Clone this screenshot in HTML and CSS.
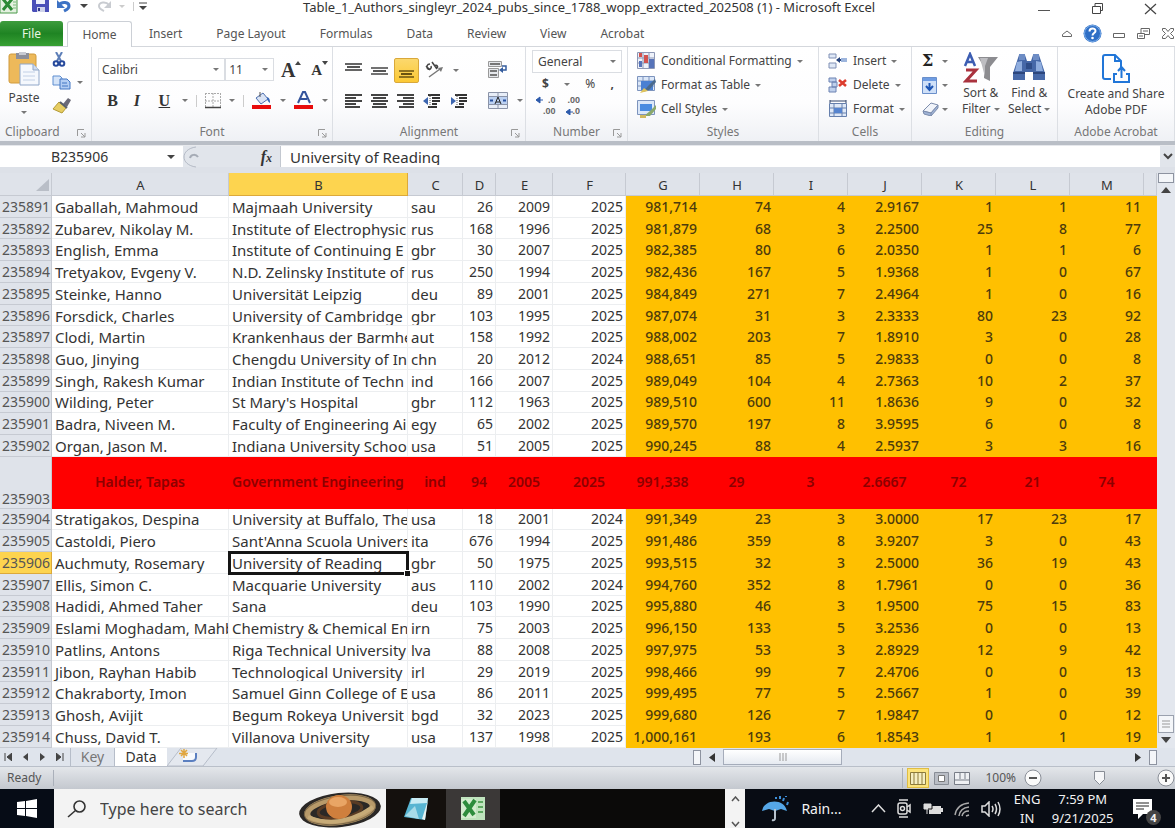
FILE: index.html
```html
<!DOCTYPE html>
<html lang="en">
<head>
<meta charset="utf-8">
<title>Table_1_Authors_singleyr_2024_pubs_since_1788_wopp_extracted_202508 (1) - Microsoft Excel</title>
<link rel="stylesheet" href="styles.css">
</head>
<body>
<header class="titlebar">
  <div class="quick">
    <svg width="18" height="15" viewBox="0 0 18 15"><path d="M0 0h17v14H0z" fill="#e4f1e0" stroke="#4a9a4a"/><path d="M3 0l9 11M12 0L3 11" stroke="#2c8a35" stroke-width="3"/><path d="M13 3h3M13 6h3M13 9h3" stroke="#7bb97b"/></svg>
    <button aria-label="Save"><svg width="17" height="14" viewBox="0 0 17 14"><path d="M0 0h17v13H1L0 12z" fill="#4a4fb8"/><path d="M4 0h9v5H4z" fill="#eef0fb"/><path d="M5 8h8v5H5z" fill="#cfd3ea"/><path d="M6 9h2v3H6z" fill="#33388c"/></svg></button>
    <button aria-label="Undo"><svg width="15" height="13" viewBox="0 0 15 13"><path d="M2 5c3-4 10-3 10 1 0 3-3 4-5 5" fill="none" stroke="#3d72c4" stroke-width="3"/><path d="M0 0v8h8z" fill="#3d72c4"/></svg></button>
    <i class="dd dark"></i>
    <button aria-label="Redo"><svg width="15" height="13" viewBox="0 0 15 13"><path d="M13 5C10 1 3 2 3 6c0 3 3 4 5 5" fill="none" stroke="#c9ccd1" stroke-width="2"/><path d="M15 1v7H8z" fill="#c9ccd1"/></svg></button>
    <i class="dd pale"></i>
    <button class="custom" aria-label="Customize"><svg width="8" height="9" viewBox="0 0 8 9"><path d="M0 1h8" stroke="#444" stroke-width="1"/><path d="M0 4h8L4 8z" fill="#444"/></svg></button>
  </div>
  <h1>Table_1_Authors_singleyr_2024_pubs_since_1788_wopp_extracted_202508 (1) - Microsoft Excel</h1>
  <div class="winbtns">
    <button aria-label="Minimize"><svg width="13" height="13"><path d="M0 8.500h12" stroke="#555"/></svg></button>
    <button aria-label="Restore"><svg width="13" height="13" fill="none" stroke="#444"><path d="M1.500 4.500h8v7h-8zM4 4V1.500h7.500v7H10"/></svg></button>
    <button aria-label="Close"><svg width="13" height="13"><path d="M1 2l11 10M12 2L1 12" stroke="#444" stroke-width="1.200"/></svg></button>
  </div>
</header>

<nav class="tabs">
  <button class="file">File</button>
  <button class="tab home">Home</button>
  <button class="tab">Insert</button>
  <button class="tab">Page Layout</button>
  <button class="tab">Formulas</button>
  <button class="tab">Data</button>
  <button class="tab">Review</button>
  <button class="tab">View</button>
  <button class="tab">Acrobat</button>
  <div class="tabtools">
    <svg width="12" height="12" fill="none" stroke="#666"><path d="M1.500 8.500h9v-2L6 3 1.500 6.500z"/></svg>
    <svg width="19" height="19"><circle cx="9.500" cy="9.500" r="9" fill="#2f6fc6"/><circle cx="9.500" cy="9.500" r="8" fill="none" stroke="#7fb0ea"/><path d="M6.500 7.500c0-4 6-4 6-.5 0 2-3 2-3 4.500" fill="none" stroke="#fff" stroke-width="2"/><circle cx="9.500" cy="14" r="1.300" fill="#fff"/></svg>
    <svg width="14" height="12" fill="none" stroke="#666"><path d="M1.500 5.500h11v4h-11z"/></svg>
    <svg width="15" height="14" fill="none" stroke="#666"><path d="M1.500 6.500h7v5h-7zM5 6V1.500h8.500v6H9M7 4h5M3 9h4" /></svg>
    <svg width="14" height="13" fill="none" stroke="#666"><path d="M1.500 1.500h3l2.500 3 2.500-3h3v2l-3 3 3 3v2h-3L7 8.500l-2.500 3h-3v-2l3-3-3-3z"/></svg>
  </div>
</nav>

<section class="ribbon">
  <div class="group">
    <div class="body clip">
      <button class="big paste">
        <svg width="32" height="34" viewBox="0 0 32 34"><rect x="1" y="2" width="27" height="29" rx="2" fill="#edb95a" stroke="#d09a3c"/><path d="M8 1h13v6H8z" fill="#8d8f9a"/><path d="M11 0h7v3h-7z" fill="#c9cbd3"/><path d="M12 12h13l6 6v15H12z" fill="#f5f8fd" stroke="#8fa6c8"/><path d="M25 12v6h6" fill="#cfdcf0" stroke="#8fa6c8"/><path d="M15 20h12M15 24h12M15 28h12" stroke="#c2d0e6"/></svg>
        <span>Paste</span><i class="dd"></i>
      </button>
      <div class="stack">
        <svg width="14" height="15" viewBox="0 0 14 15"><path d="M4 0l5 9M10 0L5 9" stroke="#5d7fb8" stroke-width="2"/><circle cx="4" cy="11.500" r="2.300" fill="none" stroke="#26499c" stroke-width="2"/><circle cx="10" cy="11.500" r="2.300" fill="none" stroke="#26499c" stroke-width="2"/></svg>
        <div class="row"><svg width="19" height="15" viewBox="0 0 19 15"><path d="M1 1h7l2 2v7H1z" fill="#d5e4f8" stroke="#5f8ed0"/><path d="M8 4h7l3 3v7H8z" fill="#b2cdf3" stroke="#4377c3"/><path d="M10 8h5M10 11h6" stroke="#4377c3"/></svg><i class="dd"></i></div>
        <svg width="19" height="16" viewBox="0 0 19 16"><path d="M11 6l5-6 3 2-4 7z" fill="#6b6a78"/><path d="M7 4l7 6-4 5-9-4z" fill="#e7cd62" stroke="#b39a36"/><path d="M8 4l7 6" stroke="#59606e" stroke-width="2"/></svg>
      </div>
    </div>
    <div class="label start-label">Clipboard<svg class="launch" width="9" height="9"><path d="M.5 7V.5H7M4 4l4 4M8 4v4H4" fill="none" stroke="#999"/></svg></div>
  </div>

  <div class="group">
    <div class="body font">
      <div class="row">
        <label class="combo wide"><input type="text" value="Calibri" aria-label="Font"><i class="dd"></i></label>
        <label class="combo size"><input type="text" value="11" aria-label="Font size"><i class="dd"></i></label>
        <button class="serif grow">A<svg width="6" height="4"><path d="M0 4h6L3 0z" fill="#444"/></svg></button>
        <button class="serif shrink">A<svg width="6" height="4"><path d="M0 0h6L3 4z" fill="#444"/></svg></button>
      </div>
      <div class="row marks">
        <button class="serif b">B</button><button class="serif i">I</button><button class="serif u">U</button><i class="dd"></i>
        <span class="vline"></span>
        <svg width="16" height="16"><path d="M.5 0v15M8 0v15M15.500 0v15M0 .5h16M0 8h16" stroke="#aaa" stroke-dasharray="2 1"/><path d="M0 14.500h16" stroke="#444" stroke-width="1.500"/></svg><i class="dd"></i>
        <span class="vline"></span>
        <svg width="20" height="19" viewBox="0 0 20 19"><path d="M4 7l7-5 5 6-7 5z" fill="#d9e3f5" stroke="#4d6fae"/><path d="M8 6V1" stroke="#555"/><path d="M15 6c3 1 3 4 3 6-2-1-3-3-3-6" fill="#3566b8"/><path d="M0 14h19v4H0z" fill="#e80c0c"/></svg><i class="dd"></i>
        <svg width="20" height="19" viewBox="0 0 20 19"><path d="M4 12l5-11h2l5 11M6 8h7" fill="none" stroke="#34549c" stroke-width="2"/><path d="M0 14h19v4H0z" fill="#e80c0c"/></svg><i class="dd"></i>
      </div>
    </div>
    <div class="label">Font<svg class="launch" width="9" height="9"><path d="M.5 7V.5H7M4 4l4 4M8 4v4H4" fill="none" stroke="#999"/></svg></div>
  </div>

  <div class="group">
    <div class="body align">
      <div class="row">
        <svg width="17" height="24"><path d="M0 6h17M0 12h17" stroke="#333" stroke-width="1.500"/><path d="M2 9h13" stroke="#555" stroke-width="2"/></svg>
        <svg width="17" height="24"><path d="M0 10h17M0 16h17" stroke="#444" stroke-width="1.500"/><path d="M2 13h13" stroke="#555" stroke-width="2"/></svg>
        <button class="on" aria-label="Bottom Align"><svg width="17" height="24"><path d="M1 13h15M1 19h15" stroke="#6b5310" stroke-width="1.500"/><path d="M3 16h11" stroke="#6b5310" stroke-width="2"/></svg></button>
        <svg width="19" height="18" viewBox="0 0 19 18"><path d="M1 5l4 4M5 3c-3 0-4 3-2 5 2 1 4-1 3-3M7 1l5 7M9 5c3-2 5 1 2 3" fill="none" stroke="#444" stroke-width="1.500"/><path d="M4 16L15 8" stroke="#777" stroke-width="1.500"/><path d="M13 7l5-1-2 5z" fill="#777"/></svg><i class="dd"></i>
        <svg class="far" width="20" height="18" viewBox="0 0 20 18"><path d="M.5.5h13v5h-13zM.5 7.500h10v9h-10z" fill="#e6e8ec" stroke="#999"/><path d="M2 3h10M2 10h7M2 14h7" stroke="#777" stroke-width="2"/><path d="M14 5h4v4h-4" fill="none" stroke="#345c9d" stroke-width="1.500"/><path d="M15 6v6l-4-3z" fill="#345c9d"/></svg>
      </div>
      <div class="row">
        <svg width="17" height="14"><path d="M0 1h17M0 4h11M0 7h17M0 10h11M0 13h15" stroke="#444" stroke-width="2"/></svg>
        <svg width="17" height="14"><path d="M0 1h17M2 4h13M0 7h17M2 10h13M1 13h15" stroke="#444" stroke-width="2"/></svg>
        <svg class="mid" width="17" height="14"><path d="M0 1h17M6 4h11M0 7h17M6 10h11M2 13h15" stroke="#444" stroke-width="2"/></svg>
        <svg width="18" height="14"><path d="M5 1h12M9 4h8M9 10h5M5 13h9" stroke="#333" stroke-width="2"/><path d="M9 7h8" stroke="#333" stroke-width="2"/><path d="M0 7l5-4v8z" fill="#3d66b0"/><path d="M7 0v14" stroke="#555" stroke-dasharray="1 1"/></svg>
        <svg width="18" height="14"><path d="M5 1h12M9 4h8M9 10h5M5 13h9" stroke="#333" stroke-width="2"/><path d="M9 7h8" stroke="#333" stroke-width="2"/><path d="M6 7L1 3v8z" fill="#3d66b0"/><path d="M7 0v14" stroke="#555" stroke-dasharray="1 1"/></svg>
        <svg class="far" width="20" height="17"><path d="M.5.5h19v16H.5zM.5 4.500h19M.5 12.500h19M10 0v4M10 13v4" fill="#e8eef8" stroke="#8a93a8"/><path d="M1 5h18v7H1z" fill="#bcd1f2"/><path d="M2 8.500h3M15 8.500h3" stroke="#27519f" stroke-width="2"/><path d="M7 12l3-7 3 7M8 10h4" fill="none" stroke="#222"/></svg><i class="dd"></i>
      </div>
    </div>
    <div class="label">Alignment<svg class="launch" width="9" height="9"><path d="M.5 7V.5H7M4 4l4 4M8 4v4H4" fill="none" stroke="#999"/></svg></div>
  </div>

  <div class="group">
    <div class="body number">
      <label class="combo"><input type="text" value="General" aria-label="Number format"><i class="dd"></i></label>
      <div class="row money"><button class="bold">$</button><i class="dd"></i><button>%</button><button class="bold">,</button></div>
      <div class="row dec">
        <button aria-label="Increase Decimal"><svg width="7" height="10"><path d="M0 5l4-3v6zM3 5h4" fill="#2c5aab" stroke="#2c5aab"/></svg><span class="digits"><span>.0</span><span>.00</span></span></button>
        <button aria-label="Decrease Decimal"><span class="digits"><span>.00</span><span class="back"><svg width="7" height="6"><path d="M0 3l4-3v6zM3 3h4" fill="#2c5aab" stroke="#2c5aab"/></svg>.0</span></span></button>
      </div>
    </div>
    <div class="label">Number<svg class="launch" width="9" height="9"><path d="M.5 7V.5H7M4 4l4 4M8 4v4H4" fill="none" stroke="#999"/></svg></div>
  </div>

  <div class="group">
    <div class="body list">
      <button><svg width="19" height="18"><path d="M.5.5h17v16H.5zM.5 6h17M.5 11h17M6 0v17M12 0v17" fill="#eef2fa" stroke="#8d97b5"/><path d="M2 1h3v4H2zM7 3h4v8H7z" fill="#d2524e"/><path d="M2 9h3v6H2zM12 7h5v9h-5z" fill="#5673b9"/></svg>Conditional Formatting<i class="dd"></i></button>
      <button><svg width="19" height="18"><path d="M.5.5h17v14H.5zM.5 5h17M.5 10h17M6 0v15M12 0v15" fill="#dbe7f8" stroke="#7c93bd"/><path d="M4 5h12v9H4z" fill="#4a80d2"/><path d="M6 16l5-6 7-7 1 3-7 8z" fill="#4a6a8e"/><path d="M3 17l4-5 4 3z" fill="#dfc35b"/></svg>Format as Table<i class="dd"></i></button>
      <button><svg width="19" height="18"><path d="M.5.5h17v14H.5z" fill="#dbe7f8" stroke="#7c93bd"/><path d="M3 4h12v7H3z" fill="#4a8be0"/><path d="M7 16l6-5 6-6v4l-6 7z" fill="#8ba86b"/><path d="M3 15h6v3H3z" fill="#d0b95e"/></svg>Cell Styles<i class="dd"></i></button>
    </div>
    <div class="label">Styles</div>
  </div>

  <div class="group">
    <div class="body list cells">
      <button><svg width="20" height="16"><path d="M1 1h7v4H1zM1 10h7v5H1z" fill="#dfe8f6" stroke="#8090b5"/><path d="M9 7h6" stroke="#28457e" stroke-width="2"/><path d="M8 7l4-3v6z" fill="#28457e"/><path d="M13 5h6v4h-6z" fill="#9db5dd"/></svg>Insert<i class="dd"></i></button>
      <button><svg width="20" height="16"><path d="M1 1h7v4H1zM1 10h7v5H1zM4 5h5v5H4z" fill="#bfd0ec" stroke="#6c82b2"/><path d="M11 3l7 6M18 3l-7 6" stroke="#dc3c2e" stroke-width="2.500"/></svg>Delete<i class="dd"></i></button>
      <button><svg width="20" height="18"><path d="M1.500 3.500h17v13h-17zM6 3v14M14 3v14M2 8h16M2 13h16" fill="#dfe9f8" stroke="#6680ad"/><path d="M6 8h8v5H6z" fill="#5684cf"/><path d="M2 1h16M2 0v3M18 0v3" stroke="#31456b"/></svg>Format<i class="dd"></i></button>
    </div>
    <div class="label">Cells</div>
  </div>

  <div class="group">
    <div class="body editing">
      <div class="tools">
        <div class="row"><b>Σ</b><i class="dd"></i></div>
        <div class="row"><svg width="16" height="17"><path d="M.5.5h14v16H.5z" fill="#cfe0f8" stroke="#6a8fca"/><path d="M1 1h13v3H1z" fill="#6e9ce2"/><path d="M7.500 6v6M4 9l3.500 4L11 9" fill="none" stroke="#1e56b5" stroke-width="2"/></svg><i class="dd"></i></div>
        <div class="row"><svg width="17" height="14"><path d="M1 9l8-8 7 2-7 8z" fill="#f1f4fa" stroke="#7c8cac"/><path d="M1 9l8 2v3l-7-2zM9 11l7-8v3l-7 8" fill="#9fb3d6" stroke="#7c8cac"/></svg><i class="dd"></i></div>
      </div>
      <button class="big"><svg width="36" height="31" viewBox="0 0 36 31"><path d="M15 5h20l-8 10v14l-6-3V15z" fill="#8c8c90"/><path d="M17 6h8l-3 8v11" fill="#bdbdc1"/><path d="M2 14L7 2l5 12M4 10h7" fill="none" stroke="#3c5db2" stroke-width="2.500"/><path d="M3 18h10L3 29h11" fill="none" stroke="#a9323e" stroke-width="3"/></svg><span>Sort &amp;<br>Filter <i class="dd"></i></span></button>
      <button class="big"><svg width="34" height="31" viewBox="0 0 34 31"><path d="M7 3h6l2 6h4l2-6h6l6 18v7H21v-8h-8v8H1v-7z" fill="#4668a8"/><path d="M7 2h6v6H7zM21 2h6v6h-6z" fill="#6d8cc4"/><path d="M5 10l5-1v10H3zM24 9l5 1 2 9h-7z" fill="#8fadde"/><path d="M1 21h12M21 21h12" stroke="#2c467c" stroke-width="2"/><path d="M14 11h6v6h-6z" fill="#2f4d88"/></svg><span>Find &amp;<br>Select <i class="dd"></i></span></button>
    </div>
    <div class="label">Editing</div>
  </div>

  <div class="group">
    <div class="body acrobat">
      <button class="big"><svg width="28" height="30" viewBox="0 0 28 30"><path d="M9 25H3a2 2 0 0 1-2-2V3a2 2 0 0 1 2-2h10l6 6v6M13 1v6h6" fill="none" stroke="#2176d8" stroke-width="2"/><path d="M15 20h-3v8h15v-8h-3M19.500 24V14M16 17l3.500-4 3.500 4" fill="none" stroke="#2176d8" stroke-width="2"/></svg><span>Create and Share<br>Adobe PDF</span></button>
    </div>
    <div class="label">Adobe Acrobat</div>
  </div>
</section>

<section class="formulabar">
  <label class="namebox"><input type="text" value="B235906" aria-label="Name Box"><i class="dd dark"></i></label>
  <div class="fx"><svg width="22" height="22" fill="none" stroke="#b4bac5"><path d="M13 1C-3 3-3 19 13 21"/><path d="M7 12c1-4 6-4 8-1" stroke="#a5abb5" stroke-width="2"/></svg><em>f<sub>x</sub></em></div>
  <input class="formula" type="text" value="University of Reading" aria-label="Formula Bar">
  <button class="expand" aria-label="Expand"><svg width="10" height="8"><path d="M1 1l4 4 4-4" fill="none" stroke="#444" stroke-width="2"/></svg></button>
</section>

<main class="sheet">
<div class="gridwrap">
<table class="grid">
<colgroup><col class="w0"><col class="wa"><col class="wb"><col class="wc"><col class="wd"><col class="we"><col class="wf"><col class="wn"><col class="wn"><col class="wn"><col class="wn"><col class="wn"><col class="wn"><col class="wn"><col class="wz"></colgroup>
<thead><tr><th class="corner"><svg width="13" height="12"><path d="M13 0v12H0z" fill="#b9bec7"/></svg><th>A<th class="cur">B<th>C<th>D<th>E<th>F<th>G<th>H<th>I<th>J<th>K<th>L<th>M<th></tr></thead>
<tbody>
<tr><th>235891<td>Gaballah, Mahmoud<td>Majmaah University<td>sau<td>26<td>2009<td>2025<td>981,714<td>74<td>4<td>2.9167<td>1<td>1<td>11<td></tr>
<tr><th>235892<td>Zubarev, Nikolay M.<td>Institute of Electrophysic<td>rus<td>168<td>1996<td>2025<td>981,879<td>68<td>3<td>2.2500<td>25<td>8<td>77<td></tr>
<tr><th>235893<td>English, Emma<td>Institute of Continuing E<td>gbr<td>30<td>2007<td>2025<td>982,385<td>80<td>6<td>2.0350<td>1<td>1<td>6<td></tr>
<tr><th>235894<td>Tretyakov, Evgeny V.<td>N.D. Zelinsky Institute of<td>rus<td>250<td>1994<td>2025<td>982,436<td>167<td>5<td>1.9368<td>1<td>0<td>67<td></tr>
<tr><th>235895<td>Steinke, Hanno<td>Universität Leipzig<td>deu<td>89<td>2001<td>2025<td>984,849<td>271<td>7<td>2.4964<td>1<td>0<td>16<td></tr>
<tr><th>235896<td>Forsdick, Charles<td>University of Cambridge<td>gbr<td>103<td>1995<td>2025<td>987,074<td>31<td>3<td>2.3333<td>80<td>23<td>92<td></tr>
<tr><th>235897<td>Clodi, Martin<td>Krankenhaus der Barmhe<td>aut<td>158<td>1992<td>2025<td>988,002<td>203<td>7<td>1.8910<td>3<td>0<td>28<td></tr>
<tr><th>235898<td>Guo, Jinying<td>Chengdu University of In<td>chn<td>20<td>2012<td>2024<td>988,651<td>85<td>5<td>2.9833<td>0<td>0<td>8<td></tr>
<tr><th>235899<td>Singh, Rakesh Kumar<td>Indian Institute of Techn<td>ind<td>166<td>2007<td>2025<td>989,049<td>104<td>4<td>2.7363<td>10<td>2<td>37<td></tr>
<tr><th>235900<td>Wilding, Peter<td>St Mary's Hospital<td>gbr<td>112<td>1963<td>2025<td>989,510<td>600<td>11<td>1.8636<td>9<td>0<td>32<td></tr>
<tr><th>235901<td>Badra, Niveen M.<td>Faculty of Engineering Ai<td>egy<td>65<td>2002<td>2025<td>989,570<td>197<td>8<td>3.9595<td>6<td>0<td>8<td></tr>
<tr><th>235902<td>Organ, Jason M.<td>Indiana University Schoo<td>usa<td>51<td>2005<td>2025<td>990,245<td>88<td>4<td>2.5937<td>3<td>3<td>16<td></tr>
<tr class="red"><th>235903<td>Halder, Tapas<td>Government Engineering<td>ind<td>94<td>2005<td>2025<td>991,338<td>29<td>3<td>2.6667<td>72<td>21<td>74<td></tr>
<tr><th>235904<td>Stratigakos, Despina<td>University at Buffalo, The<td>usa<td>18<td>2001<td>2024<td>991,349<td>23<td>3<td>3.0000<td>17<td>23<td>17<td></tr>
<tr><th>235905<td>Castoldi, Piero<td>Sant'Anna Scuola Univers<td>ita<td>676<td>1994<td>2025<td>991,486<td>359<td>8<td>3.9207<td>3<td>0<td>43<td></tr>
<tr><th class="cur">235906<td>Auchmuty, Rosemary<td class="sel">University of Reading<td>gbr<td>50<td>1975<td>2025<td>993,515<td>32<td>3<td>2.5000<td>36<td>19<td>43<td></tr>
<tr><th>235907<td>Ellis, Simon C.<td>Macquarie University<td>aus<td>110<td>2002<td>2024<td>994,760<td>352<td>8<td>1.7961<td>0<td>0<td>36<td></tr>
<tr><th>235908<td>Hadidi, Ahmed Taher<td>Sana<td>deu<td>103<td>1990<td>2025<td>995,880<td>46<td>3<td>1.9500<td>75<td>15<td>83<td></tr>
<tr><th>235909<td>Eslami Moghadam, Mahb<td>Chemistry &amp; Chemical En<td>irn<td>75<td>2003<td>2025<td>996,150<td>133<td>5<td>3.2536<td>0<td>0<td>13<td></tr>
<tr><th>235910<td>Patlins, Antons<td>Riga Technical University<td>lva<td>88<td>2008<td>2025<td>997,975<td>53<td>3<td>2.8929<td>12<td>9<td>42<td></tr>
<tr><th>235911<td>Jibon, Rayhan Habib<td>Technological University<td>irl<td>29<td>2019<td>2025<td>998,466<td>99<td>7<td>2.4706<td>0<td>0<td>13<td></tr>
<tr><th>235912<td>Chakraborty, Imon<td>Samuel Ginn College of E<td>usa<td>86<td>2011<td>2025<td>999,495<td>77<td>5<td>2.5667<td>1<td>0<td>39<td></tr>
<tr><th>235913<td>Ghosh, Avijit<td>Begum Rokeya Universit<td>bgd<td>32<td>2023<td>2025<td>999,680<td>126<td>7<td>1.9847<td>0<td>0<td>12<td></tr>
<tr><th>235914<td>Chuss, David T.<td>Villanova University<td>usa<td>137<td>1998<td>2025<td>1,000,161<td>193<td>6<td>1.8543<td>1<td>1<td>19<td></tr>
</tbody>
</table>
</div>
<div class="vscroll">
  <span class="split"></span>
  <svg width="10" height="6"><path d="M0 6h10L5 0z" fill="#444"/></svg>
  <span class="track"></span>
  <span class="thumb"><svg width="8" height="8"><path d="M0 1h8M0 4h8M0 7h8" stroke="#999"/></svg></span>
  <svg width="10" height="6"><path d="M0 0h10L5 6z" fill="#444"/></svg>
</div>
</main>

<div class="sheettabs">
  <div class="navs">
    <svg width="8" height="8"><path d="M1 0v8M8 0L3 4l5 4z" fill="#444" stroke="#444"/></svg>
    <svg width="5" height="8"><path d="M5 0L0 4l5 4z" fill="#444"/></svg>
    <svg width="5" height="8"><path d="M0 0l5 4-5 4z" fill="#444"/></svg>
    <svg width="8" height="8"><path d="M7 0v8M0 0l5 4-5 4z" fill="#444" stroke="#444"/></svg>
  </div>
  <button class="key">Key</button>
  <button class="data">Data</button>
  <svg class="newtab" width="52" height="18"><path d="M0 18L14 0h36L36 18z" fill="#e4e8ef" stroke="#b6bdc9"/><path d="M16 5h13v6q0 3-3 3H16z" fill="#f8fafd"/><path d="M16 13h9q4 0 4-4V5" fill="none" stroke="#5b7fc0" stroke-width="2"/><path d="M17 1v9M12 5.500h9M14 2l6 6M20 2l-6 6" stroke="#e0a640" stroke-width="1.500"/></svg>
  <div class="hscroll">
    <span class="split"></span>
    <svg width="6" height="9"><path d="M6 0L0 4.500 6 9z" fill="#333"/></svg>
    <span class="thumb"><svg width="8" height="8"><path d="M1 0v8M4 0v8M7 0v8" stroke="#999"/></svg></span>
    <span class="track"></span>
    <svg width="6" height="9"><path d="M0 0l6 4.500L0 9z" fill="#333"/></svg>
    <span class="split"></span>
  </div>
</div>

<footer class="status">
  <span class="ready">Ready</span>
  <div class="views">
    <button class="on" aria-label="Normal"><svg width="16" height="13"><path d="M.5.5h15v12H.5zM4 0v13M8 0v13M12 0v13" fill="#f5eec2" stroke="#8c7a3a"/></svg></button>
    <button aria-label="Page Layout"><svg width="15" height="13"><path d="M.5.5h14v12H.5z" fill="#b9bdc5" stroke="#888d96"/><path d="M4.500 3.500h6v6h-6z" fill="#fff" stroke="#777"/></svg></button>
    <button aria-label="Page Break"><svg width="16" height="13"><path d="M.5.5h15v12H.5zM6 0v7M11 0v7M0 8h16" fill="#eef0f3" stroke="#777c86"/></svg></button>
  </div>
  <span class="pct">100%</span>
  <button class="round" aria-label="Zoom out"><svg width="18" height="18"><circle cx="9" cy="9" r="8" fill="#fafafa" stroke="#8a8f98"/><path d="M5 9h8" stroke="#555" stroke-width="2"/></svg></button>
  <span class="slider"><svg width="11" height="14"><path d="M.5.5h10v8l-5 5-5-5z" fill="#f5f6f8" stroke="#888d96"/></svg></span>
  <button class="round" aria-label="Zoom in"><svg width="18" height="18"><circle cx="9" cy="9" r="8" fill="#fafafa" stroke="#8a8f98"/><path d="M5 9h8M9 5v8" stroke="#555" stroke-width="2"/></svg></button>
</footer>

<div class="taskbar">
  <button class="start" aria-label="Start"><svg width="20" height="19"><path d="M0 3l8-1v7H0zM9 2l11-2v9H9zM0 10h8v7l-8-1zM9 10h11v9L9 17z" fill="#fff"/></svg></button>
  <label class="search"><svg width="20" height="18" fill="none" stroke="#333" stroke-width="1.600"><circle cx="12.500" cy="6.500" r="5.500"/><path d="M8.500 10.500L1 17"/></svg><input type="text" placeholder="Type here to search" aria-label="Search">
    <svg width="84" height="38" viewBox="0 0 84 38"><ellipse cx="42" cy="20" rx="41" ry="17" fill="#2b2826" transform="rotate(-6 42 20)"/><ellipse cx="42" cy="20" rx="33" ry="12" fill="none" stroke="#b89a6a" stroke-width="6" transform="rotate(-8 42 20)"/><ellipse cx="42" cy="20" rx="36" ry="14" fill="none" stroke="#7c6848" transform="rotate(-8 42 20)"/><ellipse cx="42" cy="20" rx="22" ry="8" fill="none" stroke="#593b24" stroke-width="3" transform="rotate(-8 42 20)"/><ellipse cx="41" cy="17" rx="13" ry="12" fill="#cf7f3d"/><ellipse cx="40" cy="12" rx="9" ry="5" fill="#e9a565"/><path d="M10 27q32 13 65-10" fill="none" stroke="#c7ab78" stroke-width="4"/></svg>
  </label>
  <button class="app" aria-label="Notepad"><svg width="26" height="25"><path d="M8 2h17l-3 22L1 21z" fill="#58b5d2"/><path d="M9 2h16l-1 5L7 8z" fill="#c9ecf4"/><path d="M2 20l10-10 4 13z" fill="#a8dbe8"/><path d="M22 24l3-20-6 19z" fill="#e9f3f2"/></svg></button>
  <button class="app active" aria-label="Excel"><svg width="26" height="25"><path d="M1 1h24v23H1z" fill="#bfe3bd"/><path d="M1 3h15v19H1z" fill="#d3ecce"/><path d="M4 5l10 14M15 4L4 20" stroke="#2d8c3c" stroke-width="4"/><path d="M18 6h5M18 11h5M18 16h5" stroke="#5da860" stroke-width="2"/></svg></button>
  <span class="space"></span>
  <div class="updown"><svg width="9" height="6"><path d="M1 5l3.500-4L8 5" fill="none" stroke="#555" stroke-width="1.500"/></svg><svg width="9" height="6"><path d="M1 1l3.500 4L8 1" fill="none" stroke="#555" stroke-width="1.500"/></svg></div>
  <div class="tray">
    <svg width="28" height="28"><path d="M0 16C2 4 22 3 25 16l-6-2-6 2-6-2z" fill="#55a7e8"/><path d="M13 14v9q0 3-3 2" fill="none" stroke="#b8c4cf" stroke-width="2"/><path d="M14 2v2M18 1v3M22 3l-1 3M26 7l-1 3M24 1v1" stroke="#3e8fd8" stroke-width="2"/></svg>
    <span class="rain">Rain...</span>
    <svg class="more" width="15" height="10"><path d="M1 8l6.500-7L14 8" fill="none" stroke="#ddd" stroke-width="1.500"/></svg>
    <svg width="14" height="19" fill="none" stroke="#ddd" stroke-width="1.500"><path d="M2 1h9M2 18h9"/><rect x="1" y="4" width="9" height="11" rx="2"/><path d="M10 8l3-2v7l-3-2"/><circle cx="5.500" cy="9.500" r="2"/></svg>
    <svg width="20" height="14"><path d="M1 2h7v5H1zM4 7v5" fill="#ddd" stroke="#ddd"/><path d="M6 4h12v8H6z" fill="#ddd"/><path d="M18 6h2v4h-2z" fill="#ddd"/><path d="M9 4v3H5" fill="none" stroke="#111"/></svg>
    <svg width="16" height="16" fill="none" stroke="#aaa" stroke-width="1.500"><path d="M1 14Q3 3 15 2M5 15q1-8 10-9M8 15q1-5 7-5M12 15l3-1"/></svg>
    <svg width="21" height="16" fill="none" stroke="#ddd" stroke-width="1.500"><path d="M1 5h3l4-4v14l-4-4H1zM11 5q2 3 0 6M14 3q3 5 0 10M17 1q4 7 0 14"/></svg>
    <span class="two">ENG<br>IN</span>
    <span class="two clock">7:59 PM<br>9/21/2025</span>
    <span class="note"><svg width="20" height="20"><path d="M0 0h19v15h-9l-5 5v-5H0z" fill="#fff"/><path d="M3 4h13M3 7h13M3 10h8" stroke="#222"/></svg><b>4</b></span>
  </div>
</div>
</body>
</html>
```
FILE: styles.css
```css
* { box-sizing: border-box; }
html, body { height: 100%; margin: 0; }
body {
  display: flex; flex-direction: column; overflow: hidden;
  font: 12px/16px "Noto Sans", "Open Sans", sans-serif; color: #444; background: #fff;
}
button, input { font: inherit; color: inherit; border: 0; padding: 0; margin: 0; background: none; min-width: 0; }
button { display: flex; align-items: center; justify-content: center; white-space: nowrap; }
svg { display: block; flex: none; }
.dd { display: inline-block; flex: none; border: 3px solid transparent; border-top-color: #777; border-bottom: 0; }
.dd.dark { border-width: 4px 4px 0; border-top-color: #444; }
.dd.pale { border-top-color: #ccc; }
.vline { width: 1px; height: 12px; background: #ccc; }
.row { display: flex; align-items: center; }

/* Title bar */
.titlebar { display: flex; height: 21px; flex: none; align-items: flex-start; }
.quick { display: flex; gap: 8px; align-items: center; width: 303px; height: 12px; }
.quick > svg { margin-right: 6px; }
.quick .custom { padding-left: 5px; border-left: 1px solid #ccc; }
.titlebar h1 { margin: 0; flex: 1; font-size: 13px; font-weight: 400; line-height: 15px; color: #333; white-space: nowrap; }
.winbtns { display: flex; gap: 40px; padding: 2px 18px 0 0; }

/* Ribbon tabs */
.tabs { display: flex; height: 26px; flex: none; border-bottom: 1px solid #d4d7dc; color: #555; }
.tabs .file { width: 63px; height: 25px; margin-right: 4px; background: linear-gradient(#3d9c3d, #1f8423 50%, #37a033); color: #e9f6e4; border-radius: 3px 3px 0 0; }
.tab { padding: 0 17px; height: 26px; }
.tab.home { width: 65px; padding: 0; background: #fff; border: 1px solid #ccd0d6; border-bottom: 0; border-radius: 3px 3px 0 0; }
.tabtools { display: flex; gap: 10px; align-items: center; margin-left: auto; }

/* Ribbon */
.ribbon {
  display: grid; flex: none; height: 98px;
  grid-template-columns: 92fr 241fr 193fr 102fr 191fr 93fr 146fr 117fr;
  background: linear-gradient(#fff, #fdfdfe 60%, #eff1f5);
  border-bottom: 4px solid #b9bec6;
}
.group { display: flex; flex-direction: column; min-width: 0; border-right: 1px solid #dcdfe4; }
.body { flex: 1; display: flex; min-height: 0; }
.label { position: relative; height: 17px; line-height: 15px; text-align: center; color: #777; white-space: nowrap; }
.start-label { text-align: left; padding-left: 5px; }
.launch { position: absolute; right: 5px; bottom: 3px; }
.big { flex-direction: column; justify-content: flex-start; line-height: 16px; gap: 2px; }
.clip { padding: 5px 8px 0; gap: 12px; }
.paste { gap: 4px; }
.paste .dd { margin-top: 1px; }
.stack { display: flex; flex-direction: column; gap: 8px; }
.stack .row { gap: 6px; }
.font { flex-direction: column; padding: 11px 4px 0 6px; gap: 10px; }
.combo { display: flex; align-items: center; height: 23px; border: 1px solid #dadde2; padding: 0 5px; background: #fff; }
.combo input { flex: 1; width: 0; }
.combo.wide { width: 128px; padding-left: 3px; }
.combo.size { width: 49px; padding-left: 3px; }
.serif { font: bold 16px/18px "Liberation Serif", serif; color: #333; align-items: flex-start; }
.grow { font-size: 20px; margin-left: 7px; }
.shrink { font-size: 15px; margin-left: 10px; }
.marks { gap: 8px; padding-left: 8px; }
.serif.i { font-style: italic; width: 21px; }
.serif.u { text-decoration: underline; width: 21px; }
.serif.b { width: 14px; }
.align { flex-direction: column; padding: 11px 4px 0 12px; gap: 10px; }
.align .row { gap: 9px; }
.align .row:first-child { height: 24px; }
.align .on { margin: 0 -3px; width: 25px; height: 25px; border: 1px solid #d9a83a; border-radius: 2px; background: linear-gradient(#fbd86d, #fcc935); }
.align .far { margin-left: 11px; }
.align .row:first-child .far { margin-left: 20px; }
.number { flex-direction: column; padding: 3px 5px 0 6px; gap: 3px; }
.money { padding: 0 8px 0 10px; justify-content: space-between; }
.bold { font-weight: 700; }
.dec { gap: 10px; padding-left: 4px; }
.dec button { align-items: flex-start; }
.digits { display: flex; flex-direction: column; align-items: flex-end; font: bold 9px/11px "Liberation Sans", sans-serif; color: #666; }
.back { display: flex; align-items: center; }
.list { flex-direction: column; padding: 5px 8px 0 9px; gap: 6px; align-items: flex-start; }
.list button { height: 18px; gap: 5px; }
.editing { padding: 5px 6px 0 10px; gap: 5px; }
.tools { display: flex; flex-direction: column; gap: 6px; width: 32px; }
.tools .row { height: 18px; justify-content: space-between; padding-right: 6px; }
.tools b { font: bold 16px/18px "DejaVu Serif", serif; color: #222; }
.editing .big { flex: 1; }
.acrobat { padding: 7px 0 0; justify-content: center; }
.big .dd { vertical-align: middle; }

/* Formula bar */
.formulabar { display: flex; height: 28px; flex: none; border-bottom: 6px solid #dde1e8; font-size: 15px; color: #333; border-top: 1px solid #e6e8ec; }
.namebox { display: flex; align-items: center; width: 183px; padding: 0 8px 0 51px; }
.namebox input { flex: 1; width: 0; font-size: 14px; }
.fx { display: flex; align-items: center; justify-content: space-between; width: 98px; padding-right: 8px; background: #e1e5eb; border-right: 1px solid #c3c8d0; }
.fx em { font: italic bold 16px/18px "Liberation Serif", serif; }
.fx sub { font-size: 12px; line-height: 1px; vertical-align: baseline; }
.formula { flex: 1; padding-left: 9px; }
.expand { width: 15px; background: #e1e5eb; }

/* Worksheet */
.sheet { flex: 1; min-height: 0; display: flex; }
.gridwrap { flex: 1; min-width: 0; height: 100%; overflow: hidden; }
.grid { width: 100%; height: 100%; table-layout: fixed; border-collapse: separate; border-spacing: 0; font: 14px/18px "Noto Sans", sans-serif; color: #333; }
.w0 { width: 52px; } .wa { width: 177px; } .wb { width: 179px; } .wc { width: 55px; } .wd { width: 33px; }
.we { width: 57px; } .wf { width: 73px; } .wn { width: 74px; } .wz { width: 13px; }
.grid th, .grid td { height: 21px; padding: 1px 2px 0 3px; overflow: hidden; white-space: nowrap; border-right: 1px solid #eceef0; border-bottom: 1px solid #eceef0; }
.grid th { font-weight: 400; background: #dfe3ea; border-color: #c6cad2; }
.grid thead th { height: 23px; font-size: 13px; }
.grid tbody th { padding: 1px 1px 0; text-align: right; color: #555; }
.grid .corner svg { margin-left: auto; }
.grid th.cur { background: #fdd44f; border-color: #dca93a; }
.grid td { text-align: right; }
.grid td:nth-child(-n+4) { text-align: left; font-size: 15px; }
.grid td:nth-child(n+8) { background: #ffc000; border-color: #ffc000; color: #4d3b0c; font-weight: 500; }
.grid .red td, .grid .red td:nth-child(n) { height: 50px; background: #f00; border-color: #f00; color: #8c0000; text-align: center; padding: 0; font-size: 14px; font-weight: 600; }
.grid .red th { vertical-align: bottom; }
.grid .sel { position: relative; overflow: visible; outline: 3px solid #151515; outline-offset: -2px; }
.grid .sel::after { content: ""; position: absolute; right: -3px; bottom: -3px; width: 5px; height: 5px; background: #151515; border: solid #fff; border-width: 1px 0 0 1px; }
.vscroll { width: 18px; display: flex; flex-direction: column; align-items: center; gap: 4px; padding-bottom: 5px; background: #e3e7ee; }
.vscroll .split { width: 16px; height: 10px; border: 1px solid #8d93a0; background: #f4f6f9; }
.vscroll .track { flex: 1; }
.vscroll .thumb { display: flex; align-items: center; justify-content: center; width: 16px; height: 18px; border: 1px solid #9aa1ae; background: #f4f6f9; }

/* Sheet tabs and horizontal scroll */
.sheettabs { display: flex; height: 18px; flex: none; background: #dfe4ec; font-size: 14px; }
.navs { display: flex; align-items: center; justify-content: space-between; width: 70px; padding: 0 6px 0 4px; }
.key { width: 45px; color: #777; border-left: 1px solid #b6bdc9; border-right: 1px solid #b6bdc9; }
.data { width: 52px; background: #fff; color: #333; }
.hscroll { display: flex; align-items: center; margin-left: auto; width: 41%; padding-right: 18px; gap: 8px; }
.hscroll .split { width: 8px; height: 15px; border: 1px solid #8d93a0; background: #f4f6f9; }
.hscroll .thumb { display: flex; align-items: center; justify-content: center; width: 119px; height: 16px; border: 1px solid #a5acba; background: linear-gradient(#fff, #e6eaf1); }
.hscroll .track { flex: 1; }

/* Status bar */
.status { display: flex; height: 23px; flex: none; align-items: center; background: linear-gradient(#e3e6ea, #c4c8cf); border-top: 1px solid #b9bfc9; color: #555; }
.ready { width: 54px; padding-left: 7px; border-right: 1px solid #aab0ba; }
.views { display: flex; gap: 5px; margin-left: auto; padding-left: 4px; border-left: 1px solid #aab0ba; }
.views .on { width: 22px; height: 20px; background: #fbe37c; border: 1px solid #e0bd43; }
.pct { margin: 0 8px 0 15px; }
.slider { display: flex; justify-content: center; width: 115px; }

/* Taskbar */
.taskbar { display: flex; height: 39px; flex: none; background: #060c16; color: #f2f2f2; overflow: hidden; }
.start { width: 54px; }
.search { display: flex; align-items: center; width: 332px; padding: 0 4px 0 13px; background: #f3f3f3; color: #333; font-size: 16px; }
.search input { flex: 1; width: 0; margin-left: 13px; height: 38px; }
.search input::placeholder { color: #444; opacity: 1; }
.app { width: 60px; background: #14100d; }
.app.active { width: 54px; background: #3b3837; }
.space { flex: 1; background: #0b0a09; }
.updown { display: flex; flex-direction: column; align-items: center; justify-content: space-between; width: 20px; padding: 7px 0 1px; background: #f3f3f3; }
.tray { display: flex; align-items: center; width: 430px; padding: 0 14px 0 17px; justify-content: space-between; background: #080c14; }
.rain { font-size: 14px; }
.more { margin-left: 18px; }
.two { text-align: center; line-height: 19px; font-size: 13px; }
.clock { margin-right: 8px; }
.note { position: relative; padding-right: 8px; }
.note b { position: absolute; right: 0; bottom: -6px; width: 15px; height: 15px; border-radius: 50%; background: #444; font-size: 11px; line-height: 15px; text-align: center; }
```
